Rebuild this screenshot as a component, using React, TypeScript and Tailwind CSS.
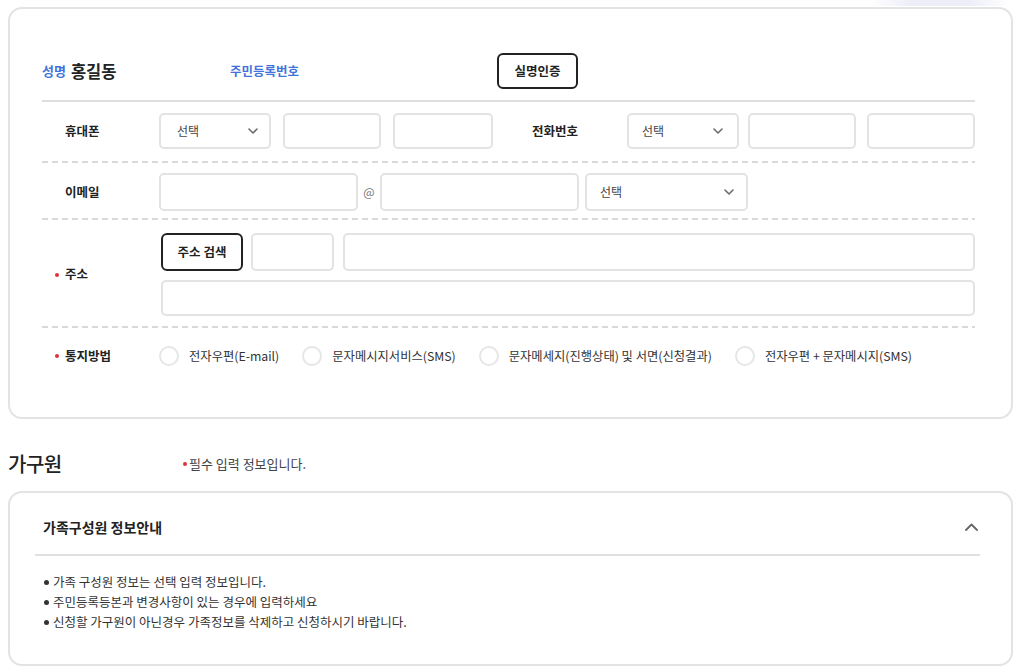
import React from "react";

const BLUE = "text-[#4374dc]";

function Chevron() {
  return (
    <svg width="10" height="6" viewBox="0 0 10 6" fill="none" className="shrink-0">
      <polyline points="1,1 5,5 9,1" stroke="#6b6b6b" strokeWidth="1.6" strokeLinecap="round" strokeLinejoin="round" />
    </svg>
  );
}

function Select({ className = "", pad = "pl-[14px] pr-[13px]" }: { className?: string; pad?: string }) {
  return (
    <div
      className={`flex items-center justify-between rounded-[5px] border-2 border-[#e3e3e3] bg-white text-[12px] text-[#444] ${pad} ${className}`}
    >
      <span>선택</span>
      <Chevron />
    </div>
  );
}

function Input({ className = "" }: { className?: string }) {
  return <input type="text" className={`rounded-[5px] border-2 border-[#e3e3e3] bg-white outline-none ${className}`} />;
}

function Dashed() {
  return <div className="h-[2px] bg-[linear-gradient(to_right,#d9d9d9_6px,transparent_6px)] bg-[length:10px_2px] bg-repeat-x" />;
}

function Required({ children }: { children: React.ReactNode }) {
  return (
    <div className="flex w-[117px] shrink-0 items-center gap-[6px] pl-[13px] text-[12.5px] font-bold text-[#222]">
      <span className="h-[4px] w-[4px] rounded-full bg-[#e0323a]" />
      {children}
    </div>
  );
}

function Radio({ label }: { label: string }) {
  return (
    <label className="flex items-center gap-[10px] text-[12.3px] text-[#333]">
      <span className="h-[20px] w-[20px] rounded-full border-2 border-[#e6e6e6] bg-white" />
      {label}
    </label>
  );
}

export default function App() {
  const methods = ["전자우편(E-mail)", "문자메시지서비스(SMS)", "문자메세지(진행상태) 및 서면(신청결과)", "전자우편 + 문자메시지(SMS)"];
  const notes = [
    "가족 구성원 정보는 선택 입력 정보입니다.",
    "주민등록등본과 변경사항이 있는 경우에 입력하세요",
    "신청할 가구원이 아닌경우 가족정보를 삭제하고 신청하시기 바랍니다.",
  ];

  return (
    <div className="min-h-[670px] w-[1024px] bg-white pl-[8px] font-['Noto_Sans_CJK_KR','Noto_Sans',sans-serif] text-[#222]">
      <div className="flex h-[7px] justify-end pr-[14px]">
        <div className="h-[6px] w-[140px] bg-[linear-gradient(to_right,transparent,#ededf8_30%,#ededf8_70%,transparent)]" />
      </div>

      <section className="w-[1005px] rounded-[14px] border-2 border-[#e3e3e3] pb-[51px] pl-[32px] pr-[36px] pt-[44px]">
        <div className="flex h-[36px] items-center">
          <div className="flex w-[188px] items-center gap-[5px]">
            <span className={`text-[13px] font-bold ${BLUE}`}>성명</span>
            <span className="text-[16.5px] font-bold text-[#222]">홍길동</span>
          </div>
          <div className={`w-[267px] text-[12.5px] font-bold ${BLUE}`}>주민등록번호</div>
          <button type="button" className="h-[36px] w-[81px] rounded-[6px] border-2 border-[#222] text-[12.5px] font-bold text-[#222]">
            실명인증
          </button>
        </div>
        <div className="mt-[11px] h-[2px] bg-[#dedede]" />

        <div className="flex items-center pb-[12px] pt-[11px]">
          <div className="w-[117px] shrink-0 pl-[23px] text-[12.5px] font-bold">휴대폰</div>
          <Select className="h-[36px] w-[112px]" pad="pl-[16px] pr-[11px]" />
          <Input className="ml-[12px] h-[36px] w-[98px]" />
          <Input className="ml-[12px] h-[36px] w-[100px]" />
          <div className="w-[134px] shrink-0 pl-[39px] text-[12.5px] font-bold">전화번호</div>
          <Select className="h-[36px] w-[112px]" pad="pl-[13px] pr-[14px]" />
          <Input className="ml-[9px] h-[36px] w-[108px]" />
          <Input className="ml-[11px] h-[36px] w-[108px]" />
        </div>
        <Dashed />

        <div className="flex items-center pb-[7px] pt-[10px]">
          <div className="w-[117px] shrink-0 pl-[23px] text-[12.5px] font-bold">이메일</div>
          <Input className="h-[38px] w-[199px]" />
          <span className="w-[22px] text-center text-[12px] text-[#777]">@</span>
          <Input className="h-[38px] w-[199px]" />
          <Select className="ml-[6px] h-[38px] w-[163px]" pad="pl-[13px] pr-[12px]" />
        </div>
        <Dashed />

        <div className="flex items-center pb-[10px] pt-[13px]">
          <Required>주소</Required>
          <div className="flex flex-1 flex-col gap-[9px] pl-[2px]">
            <div className="flex items-center">
              <button type="button" className="h-[38px] w-[82px] rounded-[6px] border-2 border-[#222] text-[12.5px] font-bold text-[#222]">
                주소 검색
              </button>
              <Input className="ml-[8px] h-[38px] w-[83px]" />
              <Input className="ml-[9px] h-[38px] flex-1" />
            </div>
            <Input className="h-[36px] w-full" />
          </div>
        </div>
        <Dashed />

        <div className="flex items-center pt-[18px]">
          <Required>통지방법</Required>
          <div className="flex items-center gap-[23px]">
            {methods.map((m) => (
              <Radio key={m} label={m} />
            ))}
          </div>
        </div>
      </section>

      <div className="mt-[31px] flex h-[28px] items-center">
        <h2 className="w-[175px] text-[20px] font-medium tracking-[-0.5px] text-[#222]">가구원</h2>
        <span className="mr-[2px] h-[4px] w-[4px] rounded-full bg-[#e0323a]" />
        <span className="text-[13px] text-[#444]">필수 입력 정보입니다.</span>
      </div>

      <section className="mt-[13px] w-[1005px] rounded-[14px] border-2 border-[#e3e3e3] pb-[32px] pl-[25px] pr-[31px] pt-[18px]">
        <div className="flex h-[32px] items-center justify-between pl-[8px] pr-[2px]">
          <span className="text-[14px] font-bold text-[#222]">가족구성원 정보안내</span>
          <svg width="13" height="8" viewBox="0 0 13 8" fill="none">
            <polyline points="1,7 6.5,1.5 12,7" stroke="#666" strokeWidth="1.8" strokeLinecap="round" strokeLinejoin="round" />
          </svg>
        </div>
        <div className="mt-[11px] h-[2px] bg-[#e0e0e0]" />
        <ul className="pl-[9px] pt-[16px] text-[12.5px] leading-[20px] text-[#333]">
          {notes.map((n) => (
            <li key={n} className="flex items-center gap-[4px]">
              <span className="h-[5px] w-[5px] rounded-full bg-[#333]" />
              {n}
            </li>
          ))}
        </ul>
      </section>
    </div>
  );
}
